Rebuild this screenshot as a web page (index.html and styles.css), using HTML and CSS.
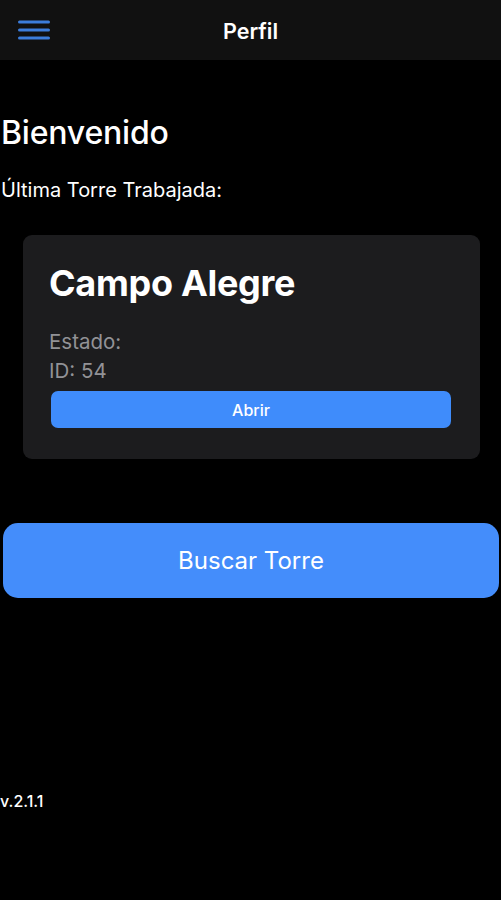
FILE: index.html
```html
<!DOCTYPE html>
<html lang="es">
<head>
<meta charset="utf-8">
<title>Perfil</title>
<link rel="stylesheet" href="styles.css">
</head>
<body>
<header class="topbar">
  <button class="menu-btn" aria-label="Menú">
    <svg width="32" height="20" viewBox="0 0 32 20">
      <rect x="0" y="0.5" width="32" height="3" rx="1.5" fill="#3c7ddb"/>
      <rect x="0" y="8.5" width="32" height="3" rx="1.5" fill="#3c7ddb"/>
      <rect x="0" y="16.5" width="32" height="3" rx="1.5" fill="#3c7ddb"/>
    </svg>
  </button>
  <h1 class="title">Perfil</h1>
</header>
<main class="content">
  <h2 class="welcome">Bienvenido</h2>
  <p class="subtitle">Última Torre Trabajada:</p>
  <section class="card">
    <h3 class="card-title">Campo Alegre</h3>
    <p class="meta">Estado:</p>
    <p class="meta">ID: 54</p>
    <button class="open-btn">Abrir</button>
  </section>
  <button class="search-btn">Buscar Torre</button>
  <p class="version">v.2.1.1</p>
</main>
</body>
</html>
```
FILE: styles.css
```css
* { box-sizing: border-box; }
html, body { margin: 0; padding: 0; }
body {
  background: #000;
  color: #fff;
  font-family: Inter, "Noto Sans", "Liberation Sans", sans-serif;
  width: 501px;
  min-height: 900px;
}
.topbar {
  position: relative;
  height: 60px;
  background: #111111;
  display: flex;
  align-items: center;
  justify-content: center;
}
.menu-btn {
  position: absolute;
  left: 18px;
  top: 20px;
  padding: 0;
  border: 0;
  background: none;
  line-height: 0;
}
.title {
  margin: 0;
  font-size: 21.5px;
  font-weight: 600;
  line-height: 24px;
  padding-top: 2px;
}
.content {
  display: flex;
  flex-direction: column;
}
.welcome {
  margin: 55px 0 0 1px;
  font-size: 32px;
  font-weight: 500;
  line-height: 36px;
  letter-spacing: -0.2px;
}
.subtitle {
  margin: 27px 0 0 1px;
  font-size: 20px;
  line-height: 24px;
  font-weight: 400;
}
.card {
  margin: 33px 21px 0 23px;
  background: #1c1c1e;
  border-radius: 9px;
  padding: 28px 29px 31px 26px;
  display: flex;
  flex-direction: column;
}
.card-title {
  margin: 0;
  font-size: 36px;
  font-weight: 700;
  line-height: 40px;
  letter-spacing: -0.3px;
}
.meta {
  margin: 0;
  font-size: 20.5px;
  line-height: 29px;
  color: #929296;
}
.card-title + .meta { margin-top: 24px; }
.open-btn {
  margin: 6px 0 0 2px;
  height: 37px;
  border: 0;
  border-radius: 7px;
  background: #3f8cfb;
  color: #fff;
  font-family: inherit;
  font-size: 16px;
  font-weight: 500;
}
.search-btn {
  margin: 64px 2px 0 3px;
  height: 75px;
  border: 0;
  border-radius: 15px;
  background: #448dfb;
  color: #fff;
  font-family: inherit;
  font-size: 24px;
  font-weight: 400;
}
.version {
  margin: 194px 0 0 0;
  font-size: 16px;
  line-height: 18px;
  font-weight: 500;
}
```
